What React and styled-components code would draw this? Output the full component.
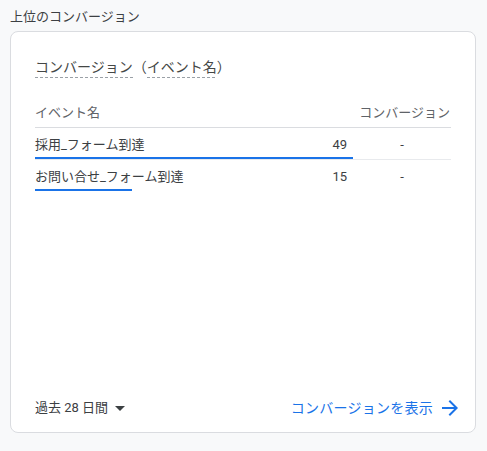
import React from 'react';
import styled, { createGlobalStyle } from 'styled-components';

const GlobalStyle = createGlobalStyle`
  body {
    margin: 0;
    background: #f8f9fa;
    font-family: Roboto, "Noto Sans CJK JP", sans-serif;
    color: #202124;
  }
`;

const Page = styled.div`
  padding: 7px 11px 0 10px;
`;

const PageTitle = styled.div`
  font-size: 13px;
  line-height: 20px;
  color: #3c4043;
  margin-bottom: 4px;
`;

const Card = styled.div`
  background: #fff;
  border: 1px solid #dadce0;
  border-radius: 8px;
  display: flex;
  flex-direction: column;
  padding: 25px 0 0 24px;
  box-sizing: border-box;
  height: 402px;
`;

const CardTitle = styled.div`
  font-size: 14px;
  line-height: 20px;
  color: #444746;
  display: flex;
  align-items: flex-start;
`;

const Dotted = styled.span`
  display: inline-block;
  padding-bottom: 1px;
  background-image: linear-gradient(to right, #9aa0a6 60%, transparent 60%);
  background-size: 5px 1px;
  background-repeat: repeat-x;
  background-position: left bottom;
`;

const Table = styled.div`
  width: 416px;
  margin-top: 25px;
`;

const HeaderRow = styled.div`
  display: grid;
  grid-template-columns: 318px 98px;
  font-size: 13px;
  line-height: 20px;
  color: #5f6368;
  padding-bottom: 4px;
  border-bottom: 1px solid #dadce0;
`;

const HeadRight = styled.div`
  text-align: right;
  padding-right: 1px;
`;

const Row = styled.div`
  display: grid;
  grid-template-columns: 318px 98px;
  padding-top: 7px;
  border-bottom: 1px solid ${p => (p.$last ? 'transparent' : '#e8eaed')};
`;

const NameCell = styled.div`
  display: flex;
  flex-direction: column;
`;

const NameLine = styled.div`
  display: flex;
  justify-content: space-between;
  font-size: 13px;
  line-height: 20px;
  color: #3c4043;
  padding-right: 6px;
`;

const Bar = styled.div`
  height: 2px;
  margin-top: 2px;
  background: #1a73e8;
`;

const ConvCell = styled.div`
  font-size: 13px;
  line-height: 20px;
  color: #3c4043;
  text-align: center;
`;

const Footer = styled.div`
  margin-top: auto;
  display: flex;
  align-items: center;
  justify-content: space-between;
  padding: 0 13px 12px 0;
  height: 24px;
`;

const RangeButton = styled.div`
  display: flex;
  align-items: center;
  font-size: 13px;
  color: #3c4043;
  line-height: 24px;
`;

const ViewLink = styled.a`
  display: flex;
  align-items: center;
  gap: 5px;
  font-size: 14px;
  letter-spacing: 0.25px;
  color: #1a73e8;
  text-decoration: none;
  line-height: 24px;
`;

const rows = [
  { name: '採用_フォーム到達', value: 49 },
  { name: 'お問い合せ_フォーム到達', value: 15 },
];

const max = Math.max(...rows.map(r => r.value));

export default function App() {
  return (
    <>
      <GlobalStyle />
      <Page>
        <PageTitle>上位のコンバージョン</PageTitle>
        <Card>
          <CardTitle>
            <Dotted>コンバージョン</Dotted>（<Dotted>イベント名</Dotted>）
          </CardTitle>
          <Table>
            <HeaderRow>
              <div>イベント名</div>
              <HeadRight>コンバージョン</HeadRight>
            </HeaderRow>
            {rows.map((r, i) => (
              <Row key={r.name} $last={i === rows.length - 1}>
                <NameCell>
                  <NameLine>
                    <span>{r.name}</span>
                    <span>{r.value}</span>
                  </NameLine>
                  <Bar style={{ width: `${(r.value / max) * 100}%` }} />
                </NameCell>
                <ConvCell>-</ConvCell>
              </Row>
            ))}
          </Table>
          <Footer>
            <RangeButton>
              過去 28 日間
              <svg width="24" height="24" viewBox="0 0 24 24">
                <path d="M7 10l5 5 5-5z" fill="#3c4043" />
              </svg>
            </RangeButton>
            <ViewLink href="#">
              コンバージョンを表示
              <svg width="24" height="24" viewBox="0 0 24 24">
                <path
                  d="M12 4l-1.41 1.41L16.17 11H4v2h12.17l-5.58 5.59L12 20l8-8z"
                  fill="#1a73e8"
                />
              </svg>
            </ViewLink>
          </Footer>
        </Card>
      </Page>
    </>
  );
}
